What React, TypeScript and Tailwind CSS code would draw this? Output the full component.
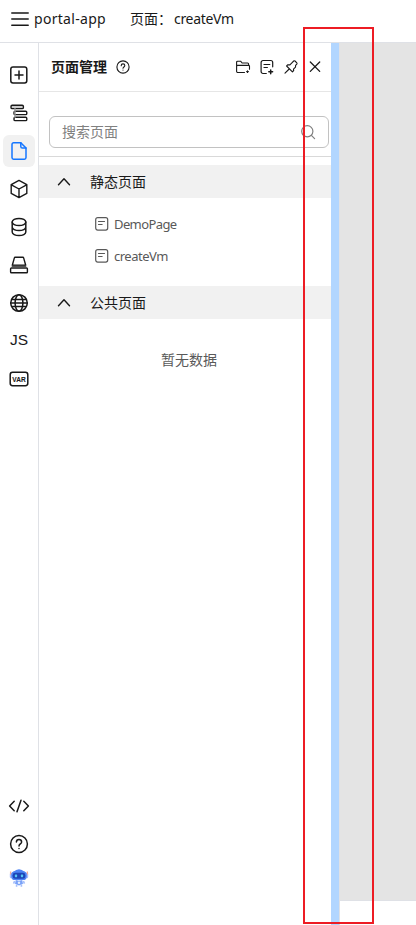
import type { ReactNode } from 'react';

function Icon({ size = 20, sw = 1.4, children }: { size?: number; sw?: number; children: ReactNode }) {
  return (
    <svg width={size} height={size} viewBox={`0 0 ${size} ${size}`} fill="none" stroke="currentColor" strokeWidth={sw} strokeLinecap="round" strokeLinejoin="round" className="block shrink-0">
      {children}
    </svg>
  );
}

const AddIcon = () => (
  <Icon sw={1.5}>
    <rect x="1.8" y="2" width="16" height="16" rx="2.2" />
    <path d="M10 6v8M6 10h8" />
  </Icon>
);
const OutlineIcon = () => (
  <Icon sw={1.4}>
    <rect x="2" y="2.2" width="12.4" height="3.4" rx="1.2" fill="#ccc" />
    <rect x="5" y="8.2" width="12.8" height="3.4" rx="1.2" />
    <rect x="5" y="14.2" width="12.8" height="3.4" rx="1.2" />
    <path d="M6 5.6v8.6" stroke="#999" />
  </Icon>
);
const PageIcon = () => (
  <Icon sw={1.5}>
    <path d="M11.8 1.8H4.6a1.6 1.6 0 0 0-1.6 1.6v13.2a1.6 1.6 0 0 0 1.6 1.6h10.8a1.6 1.6 0 0 0 1.6-1.6V7z" />
    <path d="M11.8 1.8v3.6a1.6 1.6 0 0 0 1.6 1.6H17" />
  </Icon>
);
const CubeIcon = () => (
  <Icon>
    <path d="M10 1.4 17.8 5.6v8.8L10 18.6 2.2 14.4V5.6zM2.4 5.8 10 10l7.6-4.2M10 10v8.4" />
  </Icon>
);
const DatabaseIcon = () => (
  <Icon sw={1.5}>
    <ellipse cx="10" cy="5" rx="6.8" ry="3.6" />
    <path d="M3.2 5v10c0 2 3 3.600 6.800 3.600s6.800-1.600 6.800-3.600V5M3.200 10c0 2 3 3.600 6.800 3.600s6.800-1.600 6.800-3.600" />
  </Icon>
);
const DriveIcon = () => (
  <Icon>
    <path d="M3.3 10.200 5.300 3.100a1 1 0 0 1 1-.8h7.400a1 1 0 0 1 1 .8l2 7.100z" />
    <path d="M3.3 11.300h13.400" stroke="#555" />
    <rect x="1.600" y="13" width="16.800" height="4.800" rx=".8" />
  </Icon>
);
const GlobeIcon = () => (
  <Icon sw={1.500}>
    <circle cx="10" cy="10" r="8.300" />
    <ellipse cx="10" cy="10" rx="3.900" ry="8.300" />
    <path d="M3 6.600h14M1.800 10h16.400M3 13.400h14" />
  </Icon>
);
const VarIcon = () => (
  <Icon sw={1.500}>
    <rect x="1.200" y="3.300" width="17.600" height="13.400" rx="2.400" />
    <text x="10" y="12.700" textAnchor="middle" fontSize="7.600" fontWeight="700" fill="currentColor" strokeWidth=".1" textLength="13.400" lengthAdjust="spacingAndGlyphs" fontFamily="Liberation Sans, sans-serif">VAR</text>
  </Icon>
);
const CodeIcon = () => (
  <Icon size={22} sw={1.5}>
    <path d="M6.200 6.300 1.600 11l4.600 4.700M15.800 6.300l4.600 4.700-4.600 4.700M13 5.300 9 16.700" />
  </Icon>
);
const HelpIcon = () => (
  <Icon sw={1.5}>
    <circle cx="10" cy="10" r="8.400" />
    <path d="M7.400 8.100c0-1.500 1.100-2.600 2.600-2.600s2.600 1 2.600 2.400c0 1.900-2.600 2-2.600 4" />
    <path d="M10 14.500v.1" />
  </Icon>
);
const RobotIcon = () => (
  <svg width="20" height="20" viewBox="0 0 20 20" className="block">
    <path d="M4.200 4Q10-1.600 15.800 4l.8 2H3.400z" fill="#4c83f4" />
    <rect x=".8" y="4.800" width="3" height="5.400" rx="1.200" fill="#a6bdfa" />
    <rect x="16.200" y="4.800" width="3" height="5.400" rx="1.200" fill="#a6bdfa" />
    <path d="M1.600 3.600v2.800M18.400 3.600v2.800" stroke="#f4aa98" strokeWidth="1.300" />
    <rect x="2.300" y="3.200" width="15.400" height="8.800" rx="3.600" fill="#4c83f4" />
    <rect x="3.700" y="4.800" width="12.600" height="6" rx="2.400" fill="#1d46b8" />
    <rect x="5.900" y="6.600" width="2.200" height="2.600" rx=".6" fill="#57c6f4" />
    <rect x="11.900" y="6.600" width="2.200" height="2.600" rx=".6" fill="#57c6f4" />
    <path d="m6.800 12 3.200.800 3.200-.800.800 3.800L10 17.600l-4-1.800z" fill="#7aa2f8" />
    <path d="m5.600 13-1 2.600M14.400 13l1 2.600M7.600 16.600v2.200M12.400 16.600v2.200" stroke="#a5bffb" strokeWidth="1.600" />
    <circle cx="10" cy="14.800" r="1.200" fill="#e6f0ff" />
  </svg>
);
const ChevronUp = () => (
  <Icon size={14} sw={1.4}>
    <path d="m1.500 9.800 5.500-6 5.500 6" />
  </Icon>
);
const DocIcon = () => (
  <Icon size={14} sw={1.2}>
    <rect x=".7" y=".7" width="12" height="12.400" rx="2" />
    <path d="M3.500 4.500h6M3.500 7.500h3.600" />
  </Icon>
);

const tools: { name: string; icon: ReactNode; active?: boolean }[] = [
  { name: 'add', icon: <AddIcon /> },
  { name: 'outline', icon: <OutlineIcon /> },
  { name: 'page', icon: <PageIcon />, active: true },
  { name: 'block', icon: <CubeIcon /> },
  { name: 'data', icon: <DatabaseIcon /> },
  { name: 'bridge', icon: <DriveIcon /> },
  { name: 'i18n', icon: <GlobeIcon /> },
  { name: 'js', icon: <span className="pb-0.5 text-[15.5px] leading-none font-['Liberation_Sans',sans-serif]">JS</span> },
  { name: 'var', icon: <VarIcon /> },
];

function Section({ title, children }: { title: string; children: ReactNode }) {
  return (
    <section>
      <div className="flex h-[33px] items-center bg-[#f1f1f1] pl-[18px]">
        <ChevronUp />
        <span className="ml-[19px]">{title}</span>
      </div>
      {children}
    </section>
  );
}

const pages = [
  { name: 'DemoPage', tracking: 'tracking-[-0.6px]' },
  { name: 'createVm', tracking: 'tracking-[-0.5px]' },
];

export default function App() {
  return (
    <div className="relative flex h-[925px] w-[416px] flex-col overflow-hidden bg-white font-['Noto_Sans','Noto_Sans_CJK_SC',sans-serif] text-sm text-[#191919]">
      <header className="flex h-[43px] shrink-0 items-center border-b border-[#dfe1e6] pb-1 pl-[11px] whitespace-nowrap">
        <Icon size={18} sw={1.5}>
          <path d="M.8 3h16.400M.8 9h16.400M.8 15.200h16.400" />
        </Icon>
        <span className="ml-[5px] w-24 tracking-[0.3px]">portal-app</span>
        <span className="w-11">页面：</span>
        <span className="tracking-[-0.3px]">createVm</span>
      </header>

      <div className="flex min-h-0 flex-1">
        <nav className="flex w-[39px] shrink-0 flex-col items-center border-r border-[#dfe1e6] pt-4">
          <div className="flex flex-col gap-1.5">
            {tools.map((t) => (
              <div key={t.name} className={`flex size-8 items-center justify-center rounded-md ${t.active ? 'bg-[#f1f1f1] text-[#1476ff]' : ''}`}>
                {t.icon}
              </div>
            ))}
          </div>
          <div className="mt-auto flex flex-col items-center pb-[37px]">
            <div className="flex h-[38px] items-center"><CodeIcon /></div>
            <div className="flex h-[38px] items-center"><HelpIcon /></div>
            <div className="mt-[5px]"><RobotIcon /></div>
          </div>
        </nav>

        <main className="flex w-[292px] shrink-0 flex-col">
          <div className="flex h-[49px] shrink-0 items-center border-b border-[#e6e6e6] pl-3">
            <h1 className="font-bold">页面管理</h1>
            <span className="ml-[9px]">
              <Icon size={14} sw={1.1}>
                <circle cx="7" cy="7" r="6.100" />
                <path d="M5.200 5.700c0-1 .8-1.800 1.800-1.800s1.800.7 1.800 1.700c0 1.300-1.800 1.400-1.800 2.700M7 10v.1" />
              </Icon>
            </span>
            <div className="mr-2 ml-auto flex items-center gap-2">
              <Icon size={16} sw={1.1}>
                <path d="M9.500 13.500H2.800a1.200 1.200 0 0 1-1.200-1.200V3.200a1 1 0 0 1 1-1h3l1.500 1.800h5.500a1 1 0 0 1 1 1v1.300M1.700 7.300a1 1 0 0 1 1-.9h10.900a.9.900 0 0 1 .9.900v2.900" />
                <path d="M12.500 11.700v1.800M11.600 12.600h1.800" />
              </Icon>
              <Icon size={16} sw={1.2}>
                <path d="M7.300 14.500H4A1.900 1.900 0 0 1 2.100 12.600V3.400A1.900 1.900 0 0 1 4 1.500h7.800a1.900 1.900 0 0 1 1.900 1.900v4.400M5 5.500h5.800M5 8.500h3.400" />
                <path d="M11.700 10.900v3.800M9.800 12.800h3.800" strokeWidth="1.500" />
              </Icon>
              <Icon size={16} sw={1.1}>
                <path d="M9.400 3.300 10.700 2a1 1 0 0 1 1.300 0l1.800 1.800a1 1 0 0 1 0 1.300l-1.200 1.300-.1 1.700-2 2 .2 1.400-1.300 1.300-5.800-5.800 1.300-1.300 2 .2zM6.200 10 2 14.200" />
              </Icon>
              <Icon size={16} sw={1.3}>
                <path d="m3.300 3 9.400 9.400M12.700 3l-9.400 9.400" />
              </Icon>
            </div>
          </div>

          <div className="h-[65px] shrink-0 border-b border-[#d9d9d9] pt-6 pl-2.5">
            <div className="flex h-8 w-[280px] items-center rounded-md border border-[#c2c2c2] pr-3 pl-3 text-[#808080]">
              <span className="flex-1">搜索页面</span>
              <Icon size={16} sw={1.2}>
                <circle cx="7.300" cy="7.300" r="5.600" />
                <path d="m11.400 11.400 3.200 3.200" />
              </Icon>
            </div>
          </div>

          <div className="pt-2">
            <Section title="静态页面">
              <div className="pt-2.5 pb-3.5 text-[13px] text-[#595959]">
                {pages.map((page) => (
                  <div key={page.name} className="flex h-8 items-center gap-[5px] pl-14">
                    <DocIcon />
                    <span className={page.tracking}>{page.name}</span>
                  </div>
                ))}
              </div>
            </Section>
            <Section title="公共页面">
              <p className="pt-[31px] pl-2 text-center text-[#595959]">暂无数据</p>
            </Section>
          </div>
        </main>

        <div className="w-2 shrink-0 bg-[#b2d6ff]" />
        <div className="flex-1 border-l border-[#dfe1e6]">
          <div className="h-[858px] border-b border-[#dfe1e6] bg-[#e4e4e4]" />
        </div>
      </div>

      <div className="pointer-events-none absolute top-[27px] left-[303px] h-[897px] w-[71px] border-2 border-[#ed1c24]" />
    </div>
  );
}
